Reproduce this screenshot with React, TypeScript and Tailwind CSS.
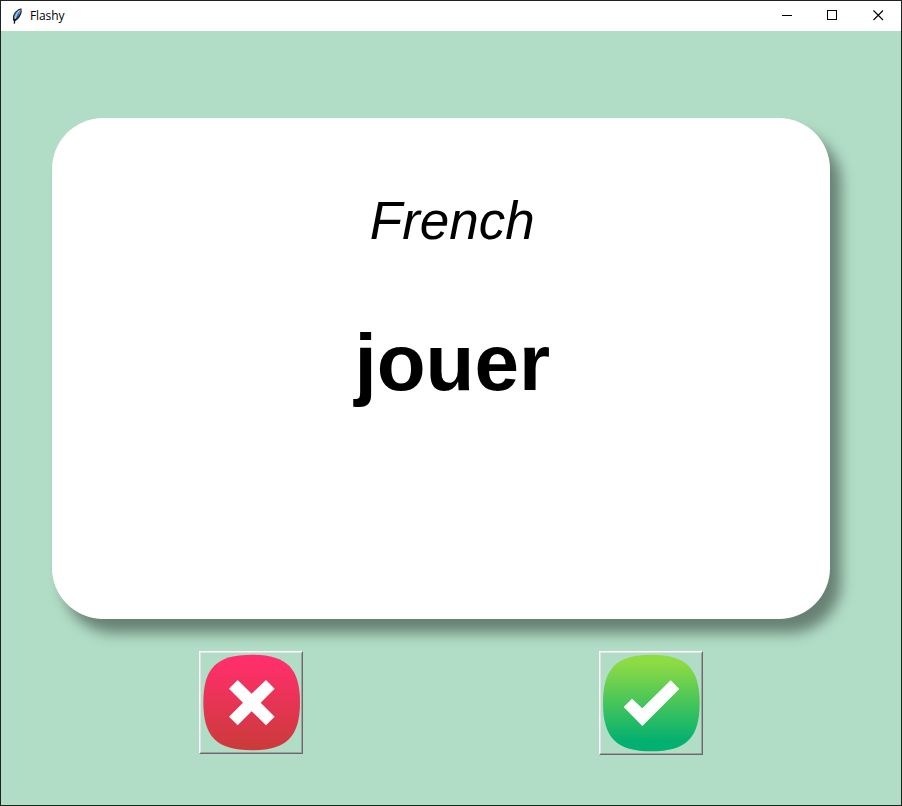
import React from "react";

function FeatherIcon() {
  return (
    <svg className="h-4 w-4 shrink-0" viewBox="0 0 16 16" fill="none">
      <path d="M12.4 0.2C8.4 1 4.6 4.6 4 8.4L3.9 12L5.6 13.4C10 11.4 12.4 7 12.7 3.6Z" fill="#16202c" />
      <path d="M11.6 1.2C8.2 2.6 5.6 5.4 5.1 8.6L5.1 11.6C8.8 9.8 11.3 6.4 11.7 3.4Z" fill="#5d94d0" />
      <path d="M10.6 2.4C8.2 4.6 6.6 7.8 6 11" stroke="#c3dbee" strokeWidth="0.9" />
      <path d="M7.8 10.2L10 5.4" stroke="#294a74" strokeWidth="0.8" />
      <path d="M5.7 10.8L5.4 15.6" stroke="#111111" strokeWidth="1.3" />
    </svg>
  );
}

function TitleBar() {
  return (
    <header className="flex h-[30px] shrink-0 items-center bg-white pl-2">
      <FeatherIcon />
      <span className="ml-[5px] font-['Open_Sans','Noto_Sans',sans-serif] text-[12px] leading-4 tracking-[-0.1px] text-black">
        Flashy
      </span>
      <div className="ml-auto flex">
        <button className="flex h-[30px] w-[45px] items-center justify-center" aria-label="Minimize">
          <svg className="ml-px" width="11" height="11" shapeRendering="crispEdges"><path d="M0 4.5H10" stroke="#000" /></svg>
        </button>
        <button className="flex h-[30px] w-[46px] items-center justify-center" aria-label="Maximize">
          <svg className="-mt-px" width="11" height="11" shapeRendering="crispEdges"><path d="M.5 .5H9.5V9.5H.5Z" fill="none" stroke="#000" /></svg>
        </button>
        <button className="flex h-[30px] w-[46px] items-center justify-center" aria-label="Close">
          <svg className="-mt-px ml-px" width="11" height="11"><path d="M.5 .5L10 10M10 .5L.5 10" stroke="#000" strokeWidth="1.1" /></svg>
        </button>
      </div>
    </header>
  );
}

function FlashCard({ language, word }: { language: string; word: string }) {
  return (
    <section className="ml-[51px] mt-[87px] flex h-[501px] w-[777.5px] shrink-0 flex-col items-center rounded-[51px] bg-white pl-[23px] pt-[73px] font-['Liberation_Sans',Arial,sans-serif] text-black shadow-[11px_14px_14px_rgba(0,0,0,0.42)]">
      <p className="text-[53px] italic leading-[60px]">{language}</p>
      <h1 className="mt-[54px] text-[80px] font-bold leading-[116px]">{word}</h1>
    </section>
  );
}

function AnswerButton({ kind }: { kind: "wrong" | "right" }) {
  const wrong = kind === "wrong";
  return (
    <button
      aria-label={wrong ? "Unknown" : "Known"}
      className={`${wrong ? "h-[103px]" : "h-[104px]"} w-[104px] border border-t-white border-l-white border-r-[#696969] border-b-[#696969]`}
    >
      <span className="flex h-full w-full border border-t-[#e3e3e3] border-l-[#e3e3e3] border-r-[#a0a0a0] border-b-[#a0a0a0]">
        <svg className="h-full w-full" viewBox={wrong ? "33 39 300 297" : "33 39 300 300"}>
          <defs>
            <linearGradient id={kind} x1="0" y1="0" x2="0" y2="1">
              <stop offset="0.08" stopColor={wrong ? "#ff2f6b" : "#8edb43"} />
              <stop offset={wrong ? "0.95" : "0.9"} stopColor={wrong ? "#cd3a3c" : "#02b070"} />
            </linearGradient>
          </defs>
          {wrong ? (
            <>
              <path d="M185 44C289 44 330 83 330 187C330 291 289 331 185 331C81 331 40 291 40 187C40 83 81 44 185 44Z" fill={`url(#${kind})`} />
              <path d="M117 146L143 120L185 161L228 120L254 146L212 188L254 230L228 256L185 214L143 256L117 230L159 188Z" fill="white" />
            </>
          ) : (
            <>
              <path d="M184 44C288 44 329 84 329 189C329 294 288 334 184 334C80 334 39 294 39 189C39 84 80 44 184 44Z" fill={`url(#${kind})`} />
              <path d="M101 201L126 176L157 205L242 121L268 147L157 258Z" fill="white" />
            </>
          )}
        </svg>
      </span>
    </button>
  );
}

export default function App() {
  return (
    <div className="flex h-[806px] w-[902px] flex-col overflow-hidden border border-[#202222] bg-[#b1ddc6]">
      <TitleBar />
      <main className="flex flex-1 flex-col">
        <FlashCard language="French" word="jouer" />
        <div className="mt-8 flex items-start gap-[296px] pl-[198px]">
          <AnswerButton kind="wrong" />
          <AnswerButton kind="right" />
        </div>
      </main>
    </div>
  );
}
